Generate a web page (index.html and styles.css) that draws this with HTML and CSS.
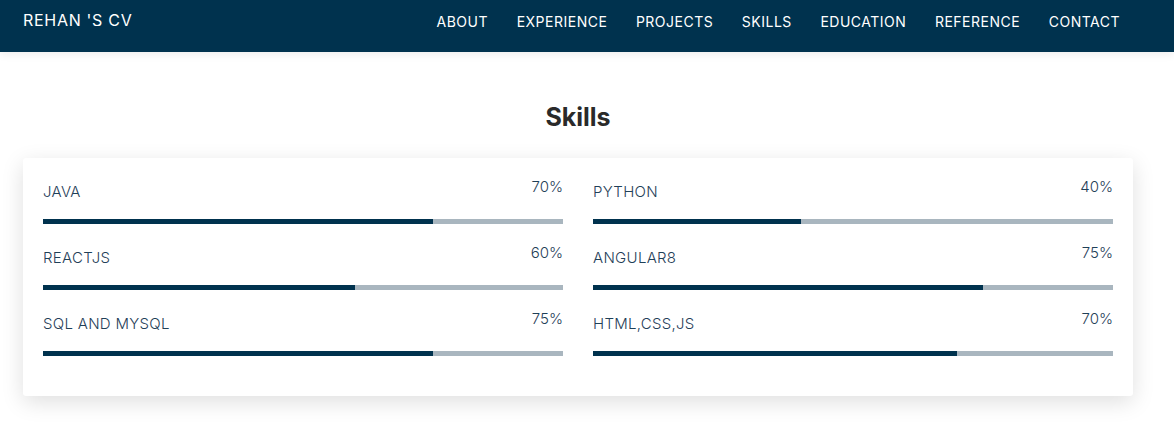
FILE: index.html
```html
<!DOCTYPE html>
<html lang="en">
<head>
<meta charset="utf-8">
<title>Rehan's CV</title>
<link rel="stylesheet" href="styles.css">
</head>
<body>
<header class="navbar">
  <div class="brand"><span>REHAN 'S CV</span></div>
  <nav class="nav">
    <a href="#">ABOUT</a>
    <a href="#">EXPERIENCE</a>
    <a href="#">PROJECTS</a>
    <a href="#">SKILLS</a>
    <a href="#">EDUCATION</a>
    <a href="#">REFERENCE</a>
    <a href="#">CONTACT</a>
  </nav>
</header>
<main class="section">
  <h2 class="title">Skills</h2>
  <div class="card">
    <div class="skill">
      <div class="skill-head"><span class="name">JAVA</span><span class="pct">70%</span></div>
      <div class="track"><div class="fill" style="width:75%"></div></div>
    </div>
    <div class="skill">
      <div class="skill-head"><span class="name">PYTHON</span><span class="pct">40%</span></div>
      <div class="track"><div class="fill" style="width:40%"></div></div>
    </div>
    <div class="skill">
      <div class="skill-head"><span class="name">REACTJS</span><span class="pct">60%</span></div>
      <div class="track"><div class="fill" style="width:60%"></div></div>
    </div>
    <div class="skill">
      <div class="skill-head"><span class="name">ANGULAR8</span><span class="pct">75%</span></div>
      <div class="track"><div class="fill" style="width:75%"></div></div>
    </div>
    <div class="skill">
      <div class="skill-head"><span class="name">SQL AND MYSQL</span><span class="pct">75%</span></div>
      <div class="track"><div class="fill" style="width:75%"></div></div>
    </div>
    <div class="skill">
      <div class="skill-head"><span class="name">HTML,CSS,JS</span><span class="pct">70%</span></div>
      <div class="track"><div class="fill" style="width:70%"></div></div>
    </div>
  </div>
</main>
</body>
</html>
```

FILE: styles.css
```css
* { box-sizing: border-box; }
html, body { margin: 0; padding: 0; background: #fff; }
body { font-family: "Inter", "Open Sans", sans-serif; }

.navbar {
  height: 52px;
  background: #00324e;
  display: flex;
  align-items: center;
  justify-content: space-between;
  padding: 0 54px 0 23px;
  box-shadow: 0 3px 8px rgba(0,0,0,0.07);
  position: relative;
  z-index: 2;
}
.brand {
  height: 26px;
  overflow: hidden;
  align-self: flex-start;
  padding-top: 10px;
}
.brand span {
  display: block;
  color: #fff;
  font-size: 16px;
  line-height: 20px;
  letter-spacing: 0.7px;
}
.nav { display: flex; gap: 28.6px; margin-top: -10px; }
.nav a {
  color: #fff;
  text-decoration: none;
  font-size: 14px;
  letter-spacing: 0.5px;
  font-weight: 400;
}

.section { padding: 50px 0 40px 23px; width: 1133px; }
.title {
  margin: 0 0 26px;
  text-align: center;
  font-size: 25px;
  font-weight: 700;
  color: #2a2a2a;
  line-height: 30px;
}
.card {
  background: #fff;
  border-radius: 3px;
  box-shadow: 0 6px 22px rgba(0,0,0,0.13);
  padding: 20px 20px 40px;
  display: grid;
  grid-template-columns: 1fr 1fr;
  column-gap: 30px;
  row-gap: 20px;
}
.skill-head {
  display: flex;
  justify-content: space-between;
  align-items: flex-start;
  height: 41px;
}
.name {
  font-size: 15px;
  font-weight: 300;
  color: #1f4058;
  letter-spacing: 0.3px;
  line-height: 18px;
  margin-top: 5px;
}
.pct {
  font-size: 15px;
  font-weight: 300;
  color: #1f4058;
  line-height: 18px;
  margin-top: 0;
}
.track { height: 5px; background: #a9b6bf; }
.fill { height: 5px; background: #00324e; }
```
